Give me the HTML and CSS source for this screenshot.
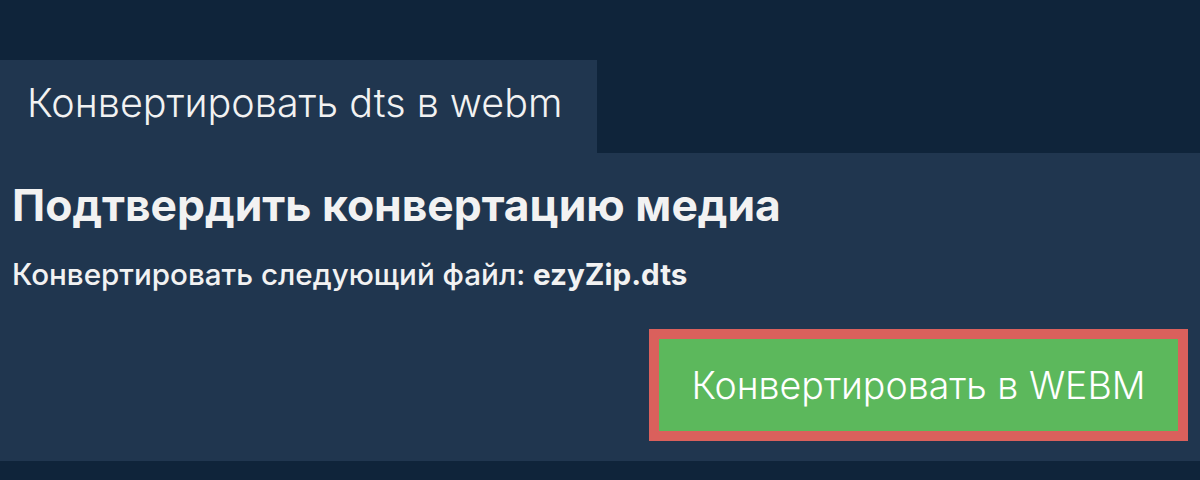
FILE: index.html
```html
<!DOCTYPE html>
<html lang="ru">
<head>
    <meta charset="UTF-8">
    <meta name="viewport" content="width=device-width, initial-scale=1.0">
    <title>Конвертировать dts в webm</title>
    <link rel="stylesheet" href="styles.css">
</head>
<body>
    <div class="tabs">
        <div class="tab">Конвертировать dts в webm</div>
    </div>
    <div class="panel">
        <h1>Подтвердить конвертацию медиа</h1>
        <p class="file">Конвертировать следующий файл: <b>ezyZip.dts</b></p>
        <div class="actions">
            <button type="button" class="convert">Конвертировать в WEBM</button>
        </div>
    </div>
</body>
</html>
```

FILE: styles.css
```css
body {
    margin: 0;
    background-color: #0f243a;
    font-family: Inter, "Noto Sans", sans-serif;
    color: #f2f2f2;
}
.tabs {
    padding-top: 60px;
    display: flex;
}
.tab {
    width: 570px;
    height: 93px;
    padding-left: 27px;
    background-color: #20364f;
    font-size: 39.5px;
    font-weight: 300;
    line-height: 86px;
}
.panel {
    background-color: #20364f;
    height: 308px;
    padding: 0 12px 0 12px;
    box-sizing: border-box;
}
h1 {
    margin: 0;
    padding-top: 30px;
    font-size: 44.4px;
    font-weight: 700;
    line-height: 44px;
}
.file {
    margin: 29px 0 0 0;
    font-size: 29.6px;
    font-weight: 500;
    line-height: 36px;
}
.file b {
    font-weight: 700;
}
.actions {
    display: flex;
    justify-content: flex-end;
    margin-top: 37px;
}
.convert {
    width: 539px;
    height: 112px;
    background-color: #5cb85c;
    border: 10px solid #da605c;
    color: #fff;
    font-family: Inter, "Noto Sans", sans-serif;
    font-size: 37.5px;
    font-weight: 300;
    cursor: pointer;
}
```
